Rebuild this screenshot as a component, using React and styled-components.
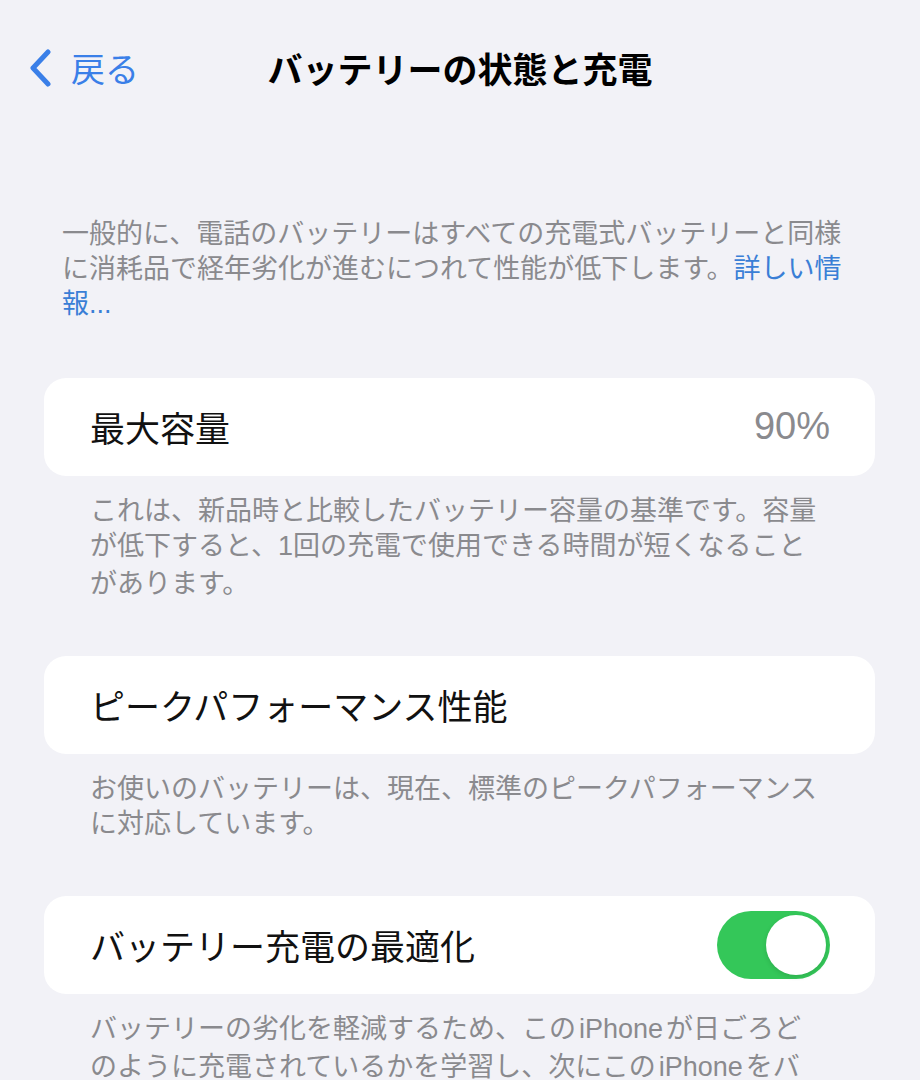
import React from 'react';
import styled, { createGlobalStyle } from 'styled-components';

const GlobalStyle = createGlobalStyle`
  html, body {
    margin: 0;
    padding: 0;
    background-color: #f2f2f7;
  }
  body {
    font-family: "Noto Sans CJK JP", "Noto Sans", sans-serif;
    -webkit-font-smoothing: antialiased;
  }
`;

const Page = styled.div`
  width: 920px;
  min-height: 1080px;
  overflow: hidden;
  background-color: #f2f2f7;
`;

const NavBar = styled.div`
  display: grid;
  grid-template-columns: 1fr auto 1fr;
  align-items: center;
  height: 136px;
`;

const BackButton = styled.button`
  display: flex;
  align-items: center;
  gap: 19px;
  justify-self: start;
  padding: 0 0 0 28px;
  border: none;
  background: none;
  color: #3a7fe8;
  font-family: inherit;
  font-size: 34px;
  line-height: 1.2;
  cursor: pointer;
`;

const Title = styled.h1`
  margin: 0;
  font-size: 35px;
  font-weight: 700;
  line-height: 1.2;
  color: #000;
`;

const Intro = styled.p`
  margin: 78px 0 0;
  padding: 0 62px;
  font-size: 27px;
  line-height: 35px;
  color: #8a8a8e;
  white-space: nowrap;
`;

const Link = styled.a`
  color: #3a7fd6;
  text-decoration: none;
`;

const Sections = styled.div`
  display: flex;
  flex-direction: column;
  gap: 57px;
  margin-top: 56px;
  padding: 0 45px 0 44px;
`;

const Section = styled.section`
  display: flex;
  flex-direction: column;
`;

const Card = styled.div`
  display: flex;
  align-items: center;
  justify-content: space-between;
  height: 98px;
  padding: 0 45px 0 46px;
  background-color: #fff;
  border-radius: 22px;
`;

const Label = styled.span`
  font-size: 35px;
  line-height: 1.2;
  color: #111;
`;

const Value = styled.span`
  font-family: "Liberation Sans", "Noto Sans", sans-serif;
  font-size: 38px;
  line-height: 1.2;
  color: #8a8a8e;
`;

const Footer = styled.p`
  margin: 0;
  padding: 15px 46px 0;
  font-size: 27px;
  line-height: 35px;
  color: #8a8a8e;
  white-space: nowrap;
`;

const Latin = styled.span`
  font-family: "Liberation Sans", "Noto Sans", sans-serif;
  margin: 0 ${({ $gap }) => $gap || 0}px;
`;

const Track = styled.div`
  display: flex;
  align-items: center;
  justify-content: ${({ $on }) => ($on ? 'flex-end' : 'flex-start')};
  width: 113px;
  height: 68px;
  padding: 4px;
  box-sizing: border-box;
  border-radius: 34px;
  background-color: ${({ $on }) => ($on ? '#34c759' : '#e9e9ea')};
`;

const Knob = styled.div`
  width: 60px;
  height: 60px;
  border-radius: 50%;
  background-color: #fff;
  box-shadow: 0 2px 5px rgba(0, 0, 0, 0.12);
`;

const Toggle = ({ on }) => (
  <Track $on={on}>
    <Knob />
  </Track>
);

const Chevron = () => (
  <svg width="24" height="38" viewBox="0 0 24 38" fill="none">
    <path d="M20 3 L5 19 L20 35" stroke="#3a7fe8" strokeWidth="5" strokeLinecap="round" strokeLinejoin="round" />
  </svg>
);

const App = () => {
  return (
    <>
      <GlobalStyle />
      <Page>
        <NavBar>
          <BackButton>
            <Chevron />
            戻る
          </BackButton>
          <Title>バッテリーの状態と充電</Title>
          <span />
        </NavBar>

        <Intro>
          一般的に、電話のバッテリーはすべての充電式バッテリーと同様
          <br />
          に消耗品で経年劣化が進むにつれて性能が低下します。<Link>詳しい情</Link>
          <br />
          <Link>
            報<Latin>...</Latin>
          </Link>
        </Intro>

        <Sections>
          <Section>
            <Card>
              <Label>最大容量</Label>
              <Value>90%</Value>
            </Card>
            <Footer>
              これは、新品時と比較したバッテリー容量の基準です。容量
              <br />
              が低下すると、<Latin>1</Latin>回の充電で使用できる時間が短くなること
              <br />
              があります。
            </Footer>
          </Section>

          <Section>
            <Card>
              <Label>ピークパフォーマンス性能</Label>
            </Card>
            <Footer>
              お使いのバッテリーは、現在、標準のピークパフォーマンス
              <br />
              に対応しています。
            </Footer>
          </Section>

          <Section>
            <Card>
              <Label>バッテリー充電の最適化</Label>
              <Toggle on />
            </Card>
            <Footer>
              バッテリーの劣化を軽減するため、この<Latin $gap={3}>iPhone</Latin>が日ごろど
              <br />
              のように充電されているかを学習し、次にこの<Latin $gap={3}>iPhone</Latin>をバ
            </Footer>
          </Section>
        </Sections>
      </Page>
    </>
  );
};

export default App;
